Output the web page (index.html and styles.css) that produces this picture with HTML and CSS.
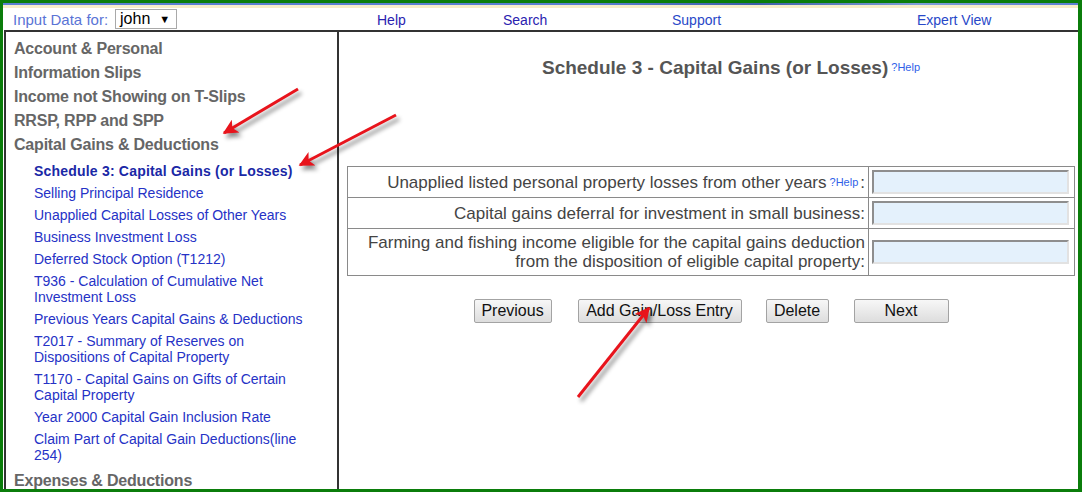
FILE: index.html
```html
<!DOCTYPE html>
<html lang="en">
<head>
  <meta charset="UTF-8">
  <title>Schedule 3 - Capital Gains (or Losses)</title>
  <link rel="stylesheet" href="styles.css">
</head>
<body>
  <div class="frame">
    <div class="stripe-blue"></div>
    <div class="stripe-cream"></div>

    <div class="topbar">
      <div class="input-for">
        <span class="input-label">Input Data for:</span>
        <span class="person-select">john <span class="caret">&#9660;</span></span>
      </div>
      <a class="nav nav-dark" href="#">Help</a>
      <a class="nav nav-dark" href="#">Search</a>
      <a class="nav" href="#">Support</a>
      <a class="nav" href="#">Expert View</a>
    </div>

    <div class="main">
      <div class="sidebar">
        <div class="cat">Account &amp; Personal</div>
        <div class="cat">Information Slips</div>
        <div class="cat">Income not Showing on T-Slips</div>
        <div class="cat">RRSP, RPP and SPP</div>
        <div class="cat">Capital Gains &amp; Deductions</div>
        <ul class="sub">
          <li class="current">Schedule 3: Capital Gains (or Losses)</li>
          <li>Selling Principal Residence</li>
          <li>Unapplied Capital Losses of Other Years</li>
          <li>Business Investment Loss</li>
          <li>Deferred Stock Option (T1212)</li>
          <li>T936 - Calculation of Cumulative Net Investment Loss</li>
          <li>Previous Years Capital Gains &amp; Deductions</li>
          <li>T2017 - Summary of Reserves on Dispositions of Capital Property</li>
          <li>T1170 - Capital Gains on Gifts of Certain Capital Property</li>
          <li>Year 2000 Capital Gain Inclusion Rate</li>
          <li>Claim Part of Capital Gain Deductions(line 254)</li>
        </ul>
        <div class="cat">Expenses &amp; Deductions</div>
      </div>

      <div class="content">
        <div class="title-row">
          <span class="title">Schedule 3 - Capital Gains (or Losses)</span><a class="help" href="#">?Help</a>
        </div>

        <table class="form-table">
          <tr>
            <td class="label">Unapplied listed personal property losses from other years<a class="help" href="#">?Help</a>:</td>
            <td class="field"><input type="text"></td>
          </tr>
          <tr>
            <td class="label">Capital gains deferral for investment in small business:</td>
            <td class="field"><input type="text"></td>
          </tr>
          <tr class="tall">
            <td class="label">Farming and fishing income eligible for the capital gains deduction<br>from the disposition of eligible capital property:</td>
            <td class="field"><input type="text"></td>
          </tr>
        </table>

        <div class="buttons">
          <button class="btn btn-prev">Previous</button>
          <button class="btn btn-add">Add Gain/Loss Entry</button>
          <button class="btn btn-del">Delete</button>
          <button class="btn btn-next">Next</button>
        </div>
      </div>
    </div>

    <!-- annotation arrows -->
    <svg class="arrows" width="1082" height="492" viewBox="0 0 1082 492">
      <defs>
        <marker id="head" viewBox="0 0 10 10" refX="9" refY="5" markerWidth="7" markerHeight="5" orient="auto">
          <path d="M0,0 L10,5 L0,10 L2.5,5 z" fill="#e8141c"/>
        </marker>
      </defs>
      <g class="arrow-set">
        <line x1="298" y1="89" x2="224" y2="133" stroke="#e8141c" stroke-width="3" marker-end="url(#head)"/>
        <line x1="396" y1="115" x2="300" y2="165" stroke="#e8141c" stroke-width="3" marker-end="url(#head)"/>
        <line x1="578" y1="397" x2="649" y2="308" stroke="#e8141c" stroke-width="3" marker-end="url(#head)"/>
      </g>
    </svg>
  </div>
</body>
</html>
```

FILE: styles.css
```css
body {
  margin: 0;
  font-family: "Liberation Sans", Arial, sans-serif;
  background-color: #fff;
}
.frame {
  position: relative;
  width: 1082px;
  height: 492px;
  box-sizing: border-box;
  border: 3px solid #0b7d0b;
  border-right-width: 4px;
  display: flex;
  flex-direction: column;
  overflow: hidden;
}
.stripe-blue {
  height: 2px;
  background: linear-gradient(to right, #5b7fd2 0%, #5b7fd2 55%, #3d5fa8 70%, #7f9fd8 85%, #5b7fd2 100%);
}
.stripe-cream {
  height: 3px;
  background-color: #f6edc9;
}
/* top bar */
.topbar {
  height: 22px;
  display: grid;
  grid-template-columns: 364px 126px 169px 245px auto;
  align-items: center;
  padding-left: 10px;
}
.input-for {
  display: flex;
  align-items: center;
}
.input-label {
  font-size: 15px;
  color: #5a74d6;
}
.person-select {
  margin-left: 7px;
  width: 62px;
  height: 20px;
  box-sizing: border-box;
  border: 1px solid #a9a9a9;
  font-size: 16px;
  line-height: 18px;
  padding-left: 4px;
  color: #000;
  position: relative;
}
.caret {
  position: absolute;
  right: 6px;
  top: 0;
  font-size: 11px;
}
.nav {
  font-size: 14px;
  color: #2848c8;
  text-decoration: none;
  padding-top: 1px;
}
.nav-dark {
  color: #2a22b0;
}
/* main area */
.main {
  flex: 1;
  display: flex;
  margin-left: 1px;
  border-top: 2px solid #333;
  border-left: 2px solid #333;
  min-height: 0;
}
.sidebar {
  width: 323px;
  border-right: 2px solid #333;
  padding: 5px 0 0 8px;
  overflow: hidden;
}
.cat {
  font-size: 16px;
  font-weight: bold;
  color: #666;
  line-height: 24px;
  letter-spacing: -0.2px;
}
.sub {
  list-style: none;
  margin: 3px 0 3px 0;
  padding: 0 0 0 20px;
  width: 284px;
}
.sub li {
  font-size: 14px;
  line-height: 16px;
  padding: 3px 0;
  color: #2532c6;
}
.sub li.current {
  font-weight: bold;
  color: #1a28a6;
  letter-spacing: 0.2px;
}
/* content */
.content {
  flex: 1;
  padding: 24px 3px 0 8px;
}
.title-row {
  text-align: center;
  line-height: 22px;
  padding-left: 40px;
  margin-bottom: 86px;
}
.title {
  font-size: 19px;
  font-weight: bold;
  color: #555;
}
.help {
  font-size: 11px;
  color: #2f5fe8;
  text-decoration: none;
  margin-left: 3px;
  vertical-align: 3px;
}
.form-table {
  width: 100%;
  border-collapse: collapse;
}
.form-table td {
  border: 1px solid #8a8a8a;
  padding: 0;
  height: 30px;
}
.form-table tr.tall td {
  height: 46px;
}
.form-table .label {
  text-align: right;
  font-size: 17px;
  color: #444;
  line-height: 19px;
  padding-right: 3px;
}
.form-table .label .help {
  margin: 0 2px 0 3px;
  vertical-align: 2px;
}
.form-table .field {
  width: 198px;
  padding: 0 4px 0 3px;
}
.form-table input {
  width: 197px;
  height: 24px;
  box-sizing: border-box;
  background-color: #e4f1fc;
  border-style: solid;
  border-width: 2px;
  border-color: #8e8e8e #e2e2e2 #e2e2e2 #8e8e8e;
  display: block;
}
.buttons {
  display: flex;
  justify-content: center;
  margin-top: 23px;
}
.btn {
  font-family: "Liberation Sans", Arial, sans-serif;
  font-size: 16px;
  color: #111;
  height: 24px;
  padding: 0 4px;
  background: linear-gradient(#f7f7f7, #dddddd);
  border: 1px solid #a3a3a3;
  border-radius: 2px;
}
.btn-prev { width: 78px; }
.btn-add { width: 164px; margin-left: 26px; }
.btn-del { width: 63px; margin-left: 24px; }
.btn-next { width: 95px; margin-left: 25px; }
/* arrows over the page */
.arrows {
  position: absolute;
  left: -3px;
  top: -3px;
  pointer-events: none;
}
.arrow-set {
  filter: drop-shadow(3px 4px 2px rgba(0, 0, 0, 0.45));
}
```
